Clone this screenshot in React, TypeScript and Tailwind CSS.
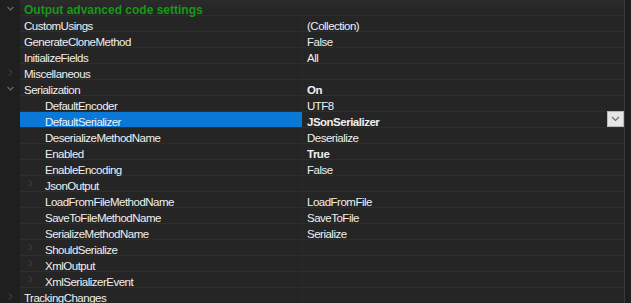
import React from 'react'

type Row = {
  name: string
  value?: string
  level: 0 | 1 | 2
  bold?: boolean
  toggle?: 'open' | 'closed'
  selected?: boolean
}

const ROWS: Row[] = [
  { name: 'CustomUsings', value: '(Collection)', level: 1 },
  { name: 'GenerateCloneMethod', value: 'False', level: 1 },
  { name: 'InitializeFields', value: 'All', level: 1 },
  { name: 'Miscellaneous', level: 1, toggle: 'closed' },
  { name: 'Serialization', value: 'On', level: 1, bold: true, toggle: 'open' },
  { name: 'DefaultEncoder', value: 'UTF8', level: 2 },
  { name: 'DefaultSerializer', value: 'JSonSerializer', level: 2, bold: true, selected: true },
  { name: 'DeserializeMethodName', value: 'Deserialize', level: 2 },
  { name: 'Enabled', value: 'True', level: 2, bold: true },
  { name: 'EnableEncoding', value: 'False', level: 2 },
  { name: 'JsonOutput', level: 2, toggle: 'closed' },
  { name: 'LoadFromFileMethodName', value: 'LoadFromFile', level: 2 },
  { name: 'SaveToFileMethodName', value: 'SaveToFile', level: 2 },
  { name: 'SerializeMethodName', value: 'Serialize', level: 2 },
  { name: 'ShouldSerialize', level: 2, toggle: 'closed' },
  { name: 'XmlOutput', level: 2, toggle: 'closed' },
  { name: 'XmlSerializerEvent', level: 2, toggle: 'closed' },
  { name: 'TrackingChanges', level: 1, toggle: 'closed' },
]

function Chevron({ open, dim }: { open: boolean; dim?: boolean }) {
  return (
    <svg width="9" height="9" viewBox="0 0 9 9" className={dim ? 'text-[#3a3a3a]' : 'text-[#6a6a6a]'}>
      {open ? (
        <path d="M1.5 3 L4.5 6 L7.5 3" fill="none" stroke="currentColor" strokeWidth="1.2" />
      ) : (
        <path d="M3 1.5 L6 4.5 L3 7.5" fill="none" stroke="currentColor" strokeWidth="1.2" />
      )}
    </svg>
  )
}

function PropRow({ row }: { row: Row }) {
  return (
    <div className="flex h-4 text-[11.5px] leading-4 tracking-[-0.5px]">
      {/* gutter */}
      <div className="w-5 shrink-0 bg-[#1f1f1f] flex items-center pl-1.5">
        {row.level === 1 && row.toggle && <Chevron open={row.toggle === 'open'} dim={row.toggle === 'closed'} />}
      </div>
      <div className="flex flex-1 border-b border-[#2e2e2e]">
        <div
          className={`w-[283px] shrink-0 flex items-center border-r border-[#2a2a2a] ${
            row.selected ? 'bg-[#0a78d6]' : ''
          }`}
        >
          {row.level === 2 && (
            <div className="w-[21px] shrink-0 flex items-center pl-1.5">
              {row.toggle && <Chevron open={false} dim />}
            </div>
          )}
          <span className="relative top-[2px] pl-1 text-[#f0f0f0] whitespace-nowrap">{row.name}</span>
        </div>
        <div className="flex-1 flex items-center pl-1 relative">
          <span className={`relative top-[2px] text-[#f0f0f0] whitespace-nowrap ${row.bold ? 'font-bold' : ''}`}>
            {row.value}
          </span>
          {row.selected && (
            <div className="absolute right-0 -top-px w-[17px] h-4 bg-[#e6e6e6] border border-[#b9b9b9] flex items-center justify-center">
              <svg width="9" height="6" viewBox="0 0 9 6">
                <path d="M1 1 L4.5 4.5 L8 1" fill="none" stroke="#6a6a6a" strokeWidth="1.1" />
              </svg>
            </div>
          )}
        </div>
      </div>
    </div>
  )
}

export default function App() {
  return (
    <div
      className="w-[631px] h-[303px] overflow-hidden bg-[#252526] flex"
      style={{ fontFamily: '"Liberation Sans", Arial, sans-serif' }}
    >
      <div className="w-[624px] shrink-0 flex flex-col">
        <div className="h-px bg-[#1c1c1c]" />
        <div className="h-px bg-[#e8e8e8]" />
        {/* category header */}
        <div className="flex h-4 text-[12px] leading-4">
          <div className="w-5 shrink-0 bg-[#1f1f1f] flex items-center pl-1.5">
            <Chevron open />
          </div>
          <div className="flex-1 bg-gradient-to-b from-[#2b2b2c] to-[#242425] border-b border-[#2e2e2e] flex items-center pl-1">
            <span className="relative top-[2px] font-bold text-[#159a15]">Output advanced code settings</span>
          </div>
        </div>
        {ROWS.map((r) => (
          <PropRow key={r.name} row={r} />
        ))}
      </div>
      <div className="flex-1 flex">
        <div className="w-px bg-[#3a3a3a]" />
        <div className="flex-1 bg-[#1e1e1e]" />
      </div>
    </div>
  )
}
